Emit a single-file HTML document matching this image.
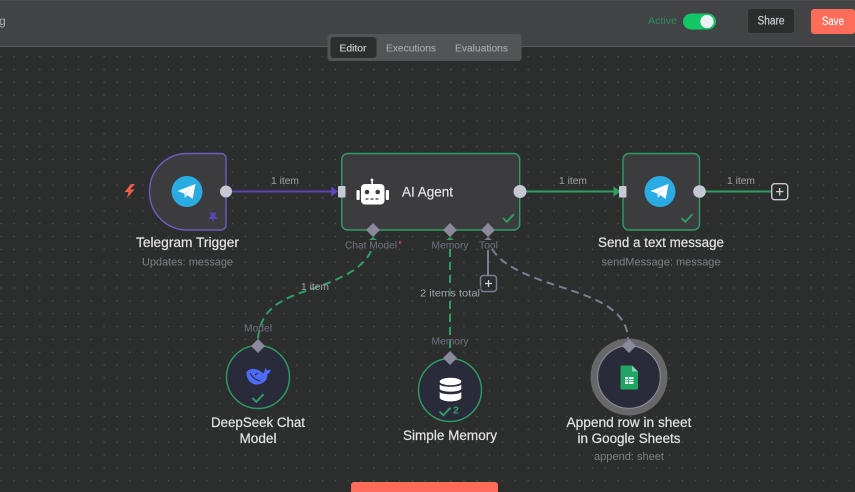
<!DOCTYPE html>
<html>
<head>
<meta charset="utf-8">
<style>
html,body{margin:0;padding:0;background:#2c2d2d;width:855px;height:492px;overflow:hidden}
svg{display:block;filter:blur(.3px)}
text{font-family:"Liberation Sans",sans-serif}
.t{font-size:13.5px;fill:#e4e4e6;text-anchor:middle;stroke:#e4e4e6;stroke-width:.2px}
.s{font-size:11px;fill:#7f7f85;text-anchor:middle}
.l{font-size:10.5px;fill:#a5a5aa;text-anchor:middle}
.p{font-size:10px;fill:#737388;text-anchor:middle}
.nav{font-size:10.5px;fill:#a8a9ad;text-anchor:middle;stroke:#a8a9ad;stroke-width:.12px}
</style>
</head>
<body>
<svg width="855" height="492" viewBox="0 0 855 492" xmlns="http://www.w3.org/2000/svg">
<defs>
<pattern id="dots" width="12.85" height="12.85" patternUnits="userSpaceOnUse" patternTransform="translate(-5.1,-1.1)">
<circle cx="6.4" cy="6.4" r=".7" fill="#565757"/>
</pattern>
<g id="tg">
<circle r="15.5" fill="#2aabe2"/>
<path d="M-9.5 -.5 L8.5 -7.5 L5.6 7.4 L.6 3.8 L-2 6.3 L-2.8 2 Z" fill="#fff"/>
<path d="M-2.8 2 L-2 6.3 L.6 3.8 L-1 2.6 L5 -4.6 Z" fill="#d3e4ee"/>
</g>
<path id="chk" d="M-5.5 0 L-1.7 3.8 L5.5 -3.8" fill="none" stroke="#2f9e63" stroke-width="1.9"/>
</defs>

<rect width="855" height="492" fill="#2c2d2d"/>
<rect width="855" height="492" fill="url(#dots)"/>

<!-- header -->
<rect width="855" height="46" fill="#424345"/>
<rect width="855" height="1" fill="#4a4b4c"/>
<rect y="46" width="855" height="1" fill="#5a5b5d"/>
<text x="-1" y="25" font-size="12" fill="#b0b1b5">g</text>
<text x="648" y="24" font-size="10.5" fill="#2a8d5c" textLength="29" lengthAdjust="spacingAndGlyphs">Active</text>
<rect x="683" y="13.5" width="33" height="16" rx="8" fill="#14c766"/>
<circle cx="707" cy="21.5" r="6.6" fill="#eef0f8"/>
<rect x="747.5" y="8.5" width="47" height="25" rx="3" fill="#2c2d2d" stroke="#454648"/>
<text x="771" y="24.5" font-size="11.5" fill="#d2d3d6" stroke="#d2d3d6" stroke-width=".15" text-anchor="middle" textLength="27" lengthAdjust="spacingAndGlyphs">Share</text>
<rect x="811" y="9" width="44" height="25" rx="3" fill="#ff6d5a"/>
<text x="833" y="25" font-size="11.5" fill="#fff" stroke="#fff" stroke-width=".15" text-anchor="middle" textLength="22" lengthAdjust="spacingAndGlyphs">Save</text>

<!-- tabs -->
<rect x="327.5" y="34" width="194" height="27" rx="3" fill="#535456"/>
<rect x="330.5" y="37" width="46" height="21" rx="3" fill="#2d2e2e"/>
<text class="nav" x="353" y="51.5" style="fill:#d5d6d9;stroke:#d5d6d9" textLength="27" lengthAdjust="spacingAndGlyphs">Editor</text>
<text class="nav" x="411" y="51.5" textLength="50" lengthAdjust="spacingAndGlyphs">Executions</text>
<text class="nav" x="481.5" y="51.5" textLength="53" lengthAdjust="spacingAndGlyphs">Evaluations</text>

<!-- connectors -->
<path d="M226 191.5 H334" stroke="#5b45b5" stroke-width="2" fill="none"/>
<path d="M331 186.5 L338 191.5 L331 196.5 Z" fill="#5b45b5"/>
<path d="M520 191.5 H616" stroke="#2f9e63" stroke-width="2" fill="none"/>
<path d="M613.5 186.5 L621 191.5 L613.5 196.5 Z" fill="#2f9e63"/>
<path d="M699 191.5 H772" stroke="#2f9e63" stroke-width="2" fill="none"/>
<path d="M371 251 C362 272 330 283 300 293 C278 301 259 312 258 340" stroke="#2f9e63" stroke-width="2" stroke-dasharray="8 5" fill="none"/>
<path d="M450 249 V352" stroke="#2f9e63" stroke-width="2" stroke-dasharray="8 5" fill="none"/>
<path d="M492 249 C505 270 540 280 570 290 C600 300 628 312 628 340" stroke="#7d7d92" stroke-width="2" stroke-dasharray="8 5" fill="none"/>
<path d="M488 250 V277" stroke="#7d7d92" stroke-width="2" fill="none"/>
<rect x="480.5" y="275.5" width="16" height="16" rx="3" fill="#2c2d2d" stroke="#7d7d92" stroke-width="1.5"/>
<path d="M488.5 280 V287 M485 283.5 H492" stroke="#d8d8de" stroke-width="1.2"/>

<!-- Telegram Trigger -->
<path d="M187.5 153.5 H221 a5 5 0 0 1 5 5 V225 a5 5 0 0 1 -5 5 H187.5 C166 230 149.5 213 149.5 191.7 C149.5 170 166 153.5 187.5 153.5 Z" fill="#3c3c3f" stroke="#6f5cc0" stroke-width="1.4"/>
<use href="#tg" x="187" y="191.5"/>
<circle cx="226" cy="191.5" r="6" fill="#c6c9d4"/>
<path d="M209 212.5 H217 L215.4 214 V216.5 L217.8 219 H213.9 L213 223 L212.1 219 H208.2 L210.6 216.5 V214 Z" fill="#5b45b5"/>
<path d="M131 184 L124.5 192 H128.5 L127 198 L134.5 189.5 H130 L135 184 Z" fill="#ee5c4b"/>
<text class="t" x="187.5" y="247" textLength="103" lengthAdjust="spacingAndGlyphs">Telegram Trigger</text>
<text class="s" x="187.5" y="265.5" textLength="91" lengthAdjust="spacingAndGlyphs">Updates: message</text>
<text class="l" x="285" y="184" textLength="28" lengthAdjust="spacingAndGlyphs">1 item</text>

<!-- AI Agent -->
<rect x="341.7" y="153.5" width="178" height="76.5" rx="6" fill="#3c3c3f" stroke="#2f9e63" stroke-width="1.4"/>
<rect x="338" y="186" width="7.5" height="11.5" rx="1" fill="#c6c9d4"/>
<rect x="361" y="184" width="23.5" height="20.5" rx="4" fill="#fff"/>
<rect x="371.3" y="180" width="1.6" height="5" fill="#fff"/>
<circle cx="372" cy="180" r="1.4" fill="#fff"/>
<rect x="356.5" y="190" width="3.2" height="10" rx="1" fill="#fff"/>
<rect x="385.8" y="190" width="3.2" height="10" rx="1" fill="#fff"/>
<circle cx="367" cy="192" r="2.3" fill="#3c3c3f"/>
<circle cx="377.7" cy="192" r="2.3" fill="#3c3c3f"/>
<path d="M365.5 199 H380" stroke="#3c3c3f" stroke-width="1.2" stroke-dasharray="3 2"/>
<text x="402" y="196.5" font-size="13.5" fill="#e4e4e6" stroke="#e4e4e6" stroke-width=".2" textLength="51" lengthAdjust="spacingAndGlyphs">AI Agent</text>
<circle cx="520" cy="191.5" r="6.5" fill="#c6c9d4"/>
<use href="#chk" x="508.5" y="218"/>
<path d="M373 223 L380 230 L373 237 L366 230 Z M450 223 L457 230 L450 237 L443 230 Z M488 223 L495 230 L488 237 L481 230 Z" fill="#8a8a9c"/>
<path d="M369 240 L373 237 L377 240 Z M446 240 L450 237 L454 240 Z" fill="#2f9e63"/>
<path d="M484 240 L488 237 L492 240 Z" fill="#7d7d92"/>
<text class="p" x="371" y="248.5" textLength="52" lengthAdjust="spacingAndGlyphs">Chat Model</text>
<text x="398" y="247.5" font-size="10" fill="#e0475a">*</text>
<text class="p" x="450" y="248.5" textLength="37" lengthAdjust="spacingAndGlyphs">Memory</text>
<text class="p" x="488.5" y="248.5" textLength="19" lengthAdjust="spacingAndGlyphs">Tool</text>
<text class="l" x="573" y="184" textLength="28" lengthAdjust="spacingAndGlyphs">1 item</text>

<!-- Send a text message -->
<rect x="623" y="153.5" width="76.5" height="76.5" rx="6" fill="#3c3c3f" stroke="#2f9e63" stroke-width="1.4"/>
<rect x="619" y="186" width="7.5" height="11.5" rx="1" fill="#c6c9d4"/>
<use href="#tg" x="660" y="191.5"/>
<circle cx="699.5" cy="191.5" r="6.3" fill="#c6c9d4"/>
<use href="#chk" x="687" y="218"/>
<text class="t" x="661" y="247" textLength="126" lengthAdjust="spacingAndGlyphs">Send a text message</text>
<text class="s" x="661" y="265.5" textLength="119" lengthAdjust="spacingAndGlyphs">sendMessage: message</text>
<text class="l" x="741" y="184" textLength="28" lengthAdjust="spacingAndGlyphs">1 item</text>
<rect x="771.7" y="183.7" width="16" height="16" rx="3" fill="#2c2d2d" stroke="#c6c9d4" stroke-width="1.4"/>
<path d="M779.7 188 V195.5 M776 191.7 H783.5" stroke="#e4e4e8" stroke-width="1.2"/>

<!-- DeepSeek -->
<circle cx="258" cy="377" r="31.5" fill="#2a2b3a" stroke="#2f9e63" stroke-width="1.4"/>
<path d="M258 339 L265 346 L258 353 L251 346 Z" fill="#8a8a9c"/>
<path d="M246.5 372 C250 367.5 256 368.5 260 371 L263.5 373.5 C264.5 371.5 265 370 265 368 L267.2 370.5 L270.5 369.5 C270.5 372 268.8 373.5 267.3 374.5 C268 380.5 262 384.5 257 384.5 C250.5 384.5 246 379 246.5 372 Z" fill="#4d6bfe"/>
<path d="M250 373 C252 377 256 380.5 260.5 381 M255 375 L258 373" fill="none" stroke="#2a2b3a" stroke-width="1.1"/>
<use href="#chk" x="258" y="398"/>
<text class="p" x="258" y="331.5" textLength="28" lengthAdjust="spacingAndGlyphs">Model</text>
<text class="t" x="258" y="427" textLength="94" lengthAdjust="spacingAndGlyphs">DeepSeek Chat</text>
<text class="t" x="258" y="443" textLength="37" lengthAdjust="spacingAndGlyphs">Model</text>
<text class="l" x="315" y="290" textLength="28" lengthAdjust="spacingAndGlyphs">1 item</text>

<!-- Simple Memory -->
<circle cx="450" cy="390" r="31.5" fill="#2a2b3a" stroke="#2f9e63" stroke-width="1.4"/>
<path d="M450 351 L457 358 L450 365 L443 358 Z" fill="#8a8a9c"/>
<ellipse cx="450.5" cy="381.5" rx="10.8" ry="3.8" fill="#fff"/>
<path d="M439.7 384.5 C442 387.5 459 387.5 461.3 384.5 V389 C459 392.5 442 392.5 439.7 389 Z" fill="#fff"/>
<path d="M439.7 392 C442 395 459 395 461.3 392 V398 C459 402.5 442 402.5 439.7 398 Z" fill="#fff"/>
<use href="#chk" x="445" y="411.5"/>
<text x="453" y="413.5" font-size="10.5" font-weight="700" fill="#2f9e63">2</text>
<text class="p" x="450" y="344.5" textLength="37" lengthAdjust="spacingAndGlyphs">Memory</text>
<text class="t" x="450" y="440" textLength="94" lengthAdjust="spacingAndGlyphs">Simple Memory</text>
<rect x="417" y="286" width="64" height="14" fill="#2c2d2d" opacity=".55"/>
<text class="l" x="450" y="296.5" textLength="60" lengthAdjust="spacingAndGlyphs">2 items total</text>

<!-- Google Sheets -->
<circle cx="629" cy="377" r="35" fill="#2a2b3a" stroke="#68686a" stroke-width="7"/>
<circle cx="629" cy="377" r="31.3" fill="#2a2b3a" stroke="#8f8f9e" stroke-width="1"/>
<path d="M629 339 L636 346 L629 353 L622 346 Z" fill="#8a8a9c"/>
<path d="M622 365.5 H632 L638 371.5 V388 a1.5 1.5 0 0 1 -1.5 1.5 H622 a1.5 1.5 0 0 1 -1.5 -1.5 V367 a1.5 1.5 0 0 1 1.5 -1.5 Z" fill="#21a464"/>
<path d="M632 365.5 L638 371.5 H633 a1 1 0 0 1 -1 -1 Z" fill="#8ed1b1"/>
<rect x="625" y="377" width="8.5" height="7" fill="#e8f5ee"/>
<path d="M625 379.4 H633.5 M625 381.7 H633.5 M628.5 377 V384" stroke="#21a464" stroke-width=".7"/>
<text class="t" x="629" y="427" textLength="125" lengthAdjust="spacingAndGlyphs">Append row in sheet</text>
<text class="t" x="629" y="443" textLength="103" lengthAdjust="spacingAndGlyphs">in Google Sheets</text>
<text class="s" x="629" y="460" textLength="70" lengthAdjust="spacingAndGlyphs">append: sheet</text>

<!-- bottom button -->
<path d="M351 492 V485 a3 3 0 0 1 3 -3 H495 a3 3 0 0 1 3 3 V492 Z" fill="#ff6d5a"/>
</svg>
</body>
</html>
